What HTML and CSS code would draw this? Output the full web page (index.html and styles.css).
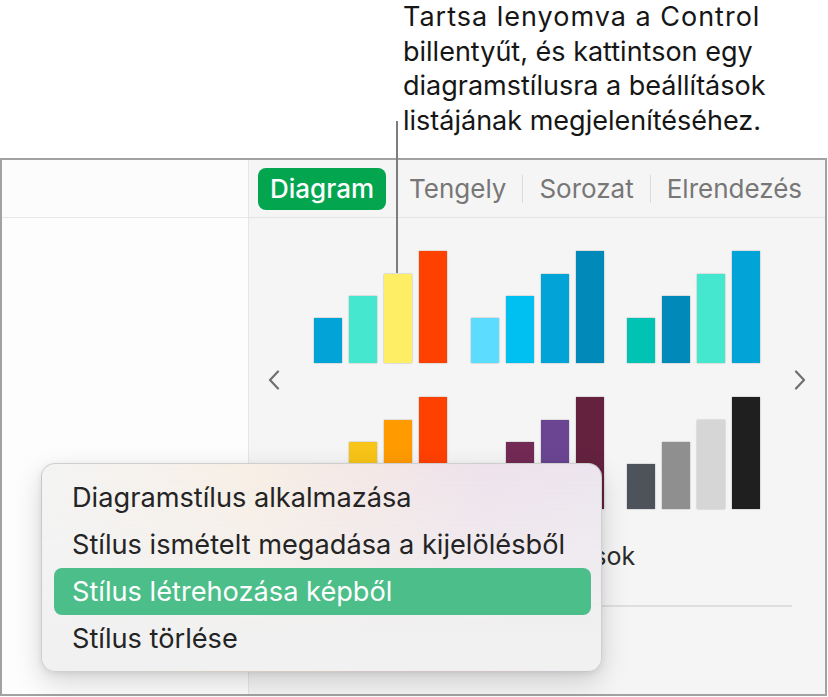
FILE: index.html
```html
<!DOCTYPE html>
<html lang="hu">
<head>
<meta charset="utf-8">
<title>Diagramstílusok</title>
<link rel="stylesheet" href="styles.css">
</head>
<body>
<div class="page">
  <div class="callout">
    <p class="callout-text"><span class="callout-first">Tartsa lenyomva a Control</span><br>billentyűt, és kattintson egy<br>diagramstílusra a beállítások<br>listájának megjelenítéséhez.</p>
  </div>
  <div class="leader"></div>

  <div class="window">
    <aside class="sidebar">
      <div class="sidebar-head"></div>
      <div class="sidebar-body"></div>
    </aside>
    <section class="panel">
      <nav class="tabs">
        <span class="tab-active">Diagram</span>
        <span class="tab">Tengely</span>
        <span class="sep"></span>
        <span class="tab">Sorozat</span>
        <span class="sep"></span>
        <span class="tab">Elrendezés</span>
      </nav>
      <div class="panel-body">
        <div class="styles-row">
          <svg class="chev" width="12" height="20" viewBox="0 0 12 20"><polyline points="10,1.5 2,10 10,18.5" fill="none" stroke="#6f6f6f" stroke-width="2.2" stroke-linecap="round" stroke-linejoin="round"/></svg>
          <div class="styles-grid">
            <div class="chart">
              <span class="bar h1 c-blue"></span><span class="bar h2 c-aqua"></span><span class="bar h3 c-yellow"></span><span class="bar h4 c-red"></span>
            </div>
            <div class="chart">
              <span class="bar h1 c-sky"></span><span class="bar h2 c-cyan"></span><span class="bar h3 c-blue"></span><span class="bar h4 c-deep"></span>
            </div>
            <div class="chart">
              <span class="bar h1 c-teal"></span><span class="bar h2 c-deep"></span><span class="bar h3 c-aqua"></span><span class="bar h4 c-blue"></span>
            </div>
            <div class="chart">
              <span class="bar h1 c-gold"></span><span class="bar h2 c-amber"></span><span class="bar h3 c-orange"></span><span class="bar h4 c-red"></span>
            </div>
            <div class="chart">
              <span class="bar h1 c-rose"></span><span class="bar h2 c-plum"></span><span class="bar h3 c-violet"></span><span class="bar h4 c-wine"></span>
            </div>
            <div class="chart">
              <span class="bar h1 c-slate"></span><span class="bar h2 c-gray"></span><span class="bar h3 c-silver"></span><span class="bar h4 c-black"></span>
            </div>
          </div>
          <svg class="chev" width="12" height="20" viewBox="0 0 12 20"><polyline points="2,1.5 10,10 2,18.5" fill="none" stroke="#6f6f6f" stroke-width="2.2" stroke-linecap="round" stroke-linejoin="round"/></svg>
        </div>
        <div class="section-label">Diagrambeállítások</div>
        <div class="rule"></div>
      </div>
    </section>
  </div>

  <div class="menu">
    <div class="menu-item">Diagramstílus alkalmazása</div>
    <div class="menu-item">Stílus ismételt megadása a kijelölésből</div>
    <div class="menu-item is-selected">Stílus létrehozása képből</div>
    <div class="menu-item">Stílus törlése</div>
  </div>
</div>
</body>
</html>
```
FILE: styles.css
```css
* { box-sizing: border-box; }

html, body {
  margin: 0;
  padding: 0;
  background: #ffffff;
}

body {
  font-family: "Inter", "Noto Sans", sans-serif;
  color: #1c1c1c;
}

.page {
  position: relative;
  width: 828px;
  height: 697px;
  overflow: hidden;
}

/* ---------- callout ---------- */
.callout {
  height: 158px;
  padding-left: 403px;
}

.callout-text {
  margin: 0;
  font-size: 27px;
  line-height: 34.5px;
  color: #161616;
}

.callout-first {
  letter-spacing: 1px;
}

.leader {
  position: absolute;
  left: 396px;
  top: 121px;
  width: 2px;
  height: 152px;
  background: #7d7d7d;
  z-index: 5;
}

/* ---------- window ---------- */
.window {
  display: flex;
  width: 827px;
  height: 538px;
  border: 2px solid #a2a2a2;
  background: #f5f5f5;
}

.sidebar {
  width: 247px;
  flex: none;
  border-right: 1px solid #e6e6e6;
  display: flex;
  flex-direction: column;
  background: #fdfdfd;
}

.sidebar-head {
  height: 58px;
  border-bottom: 1px solid #e8e8e8;
  background: #fcfcfc;
}

.sidebar-body {
  flex: 1;
}

.panel {
  flex: 1;
  display: flex;
  flex-direction: column;
}

.tabs {
  height: 58px;
  border-bottom: 1px solid #e4e4e4;
  display: flex;
  align-items: center;
  padding-left: 9px;
  background: #f5f5f5;
  font-size: 26px;
}

.tab-active {
  height: 42px;
  display: flex;
  align-items: center;
  padding: 0 12px;
  border-radius: 8px;
  background: #03a54f;
  color: #ffffff;
  margin-right: 7px;
  font-weight: 500;
}

.tab {
  padding: 0 16px;
  color: #777777;
}

.sep {
  width: 1px;
  height: 28px;
  background: #dcdcdc;
}

.panel-body {
  flex: 1;
  padding-top: 33px;
  display: flex;
  flex-direction: column;
}

.styles-row {
  display: flex;
  align-items: center;
  justify-content: space-between;
  padding: 0 19px 0 19px;
}

.chev { flex: none; }

.styles-grid {
  display: grid;
  grid-template-columns: repeat(3, 133px);
  column-gap: 23.5px;
  row-gap: 34px;
}

.chart {
  height: 112px;
  display: flex;
  align-items: flex-end;
  gap: 7px;
}

.bar {
  width: 28px;
  box-shadow: 0 0 1.5px rgba(0, 0, 0, 0.35);
}

.h1 { height: 45px; }
.h2 { height: 67px; }
.h3 { height: 89px; }
.h4 { height: 112px; }

.c-blue   { background: #02a3d6; }
.c-aqua   { background: #45e8cf; }
.c-yellow { background: #fdee66; }
.c-red    { background: #ff4100; }
.c-sky    { background: #5cdcff; }
.c-cyan   { background: #00c0f2; }
.c-deep   { background: #0089b9; }
.c-teal   { background: #00c3b3; }
.c-gold   { background: #ffd21a; }
.c-amber  { background: #f8c417; }
.c-orange { background: #ff9b00; }
.c-rose   { background: #9a3a6a; }
.c-plum   { background: #732a55; }
.c-violet { background: #6b4592; }
.c-wine   { background: #64223f; }
.c-slate  { background: #4e535b; }
.c-gray   { background: #8f8f8f; }
.c-silver { background: #d6d6d6; }
.c-black  { background: #1f1f1f; }

.section-label {
  margin-top: 32px;
  text-align: center;
  font-size: 25px;
  line-height: 30px;
  color: #2a2a2a;
  padding-right: 29px;
}

.rule {
  margin: 34px 33px 0 33px;
  height: 2px;
  background: #dfdfdf;
}

/* ---------- context menu ---------- */
.menu {
  position: absolute;
  left: 41px;
  top: 463px;
  width: 561px;
  height: 209px;
  padding: 10px 10px 9px 12px;
  border-radius: 14px;
  border: 1px solid rgba(0, 0, 0, 0.14);
  background:
    linear-gradient(to bottom, rgba(242, 242, 242, 0) 0%, rgba(242, 242, 242, 0.5) 45%, #f1f1f1 85%),
    linear-gradient(90deg, #f4f4f4 0%, #f8efe5 38%, #f4e7e6 58%, #eee2ec 80%, #ece5ee 100%);
  box-shadow: 0 10px 28px rgba(0, 0, 0, 0.16), 0 2px 6px rgba(0, 0, 0, 0.08);
  z-index: 10;
}

.menu-item {
  height: 47px;
  display: flex;
  align-items: center;
  padding-left: 18px;
  border-radius: 8px;
  font-size: 27.2px;
  color: #242424;
}

.menu-item.is-selected {
  background: #4bbe89;
  color: #ffffff;
}
```
